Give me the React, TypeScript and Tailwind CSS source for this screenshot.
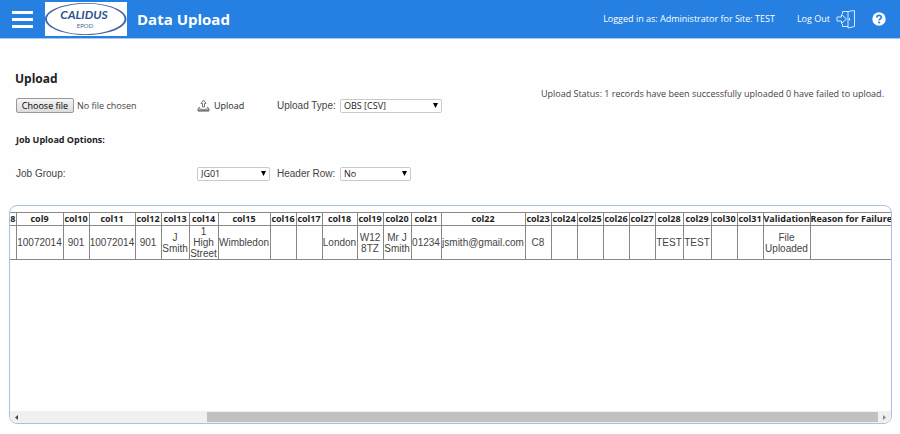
import { useRef } from "react";
import clsx from "clsx";

const columns = [
  { name: "8", value: "", width: "w-[6px]" },
  { name: "col9", value: "10072014", width: "w-[47px]" },
  { name: "col10", value: "901", width: "w-[26px]" },
  { name: "col11", value: "10072014", width: "w-[46px]" },
  { name: "col12", value: "901", width: "w-[26px]" },
  { name: "col13", value: "J Smith", width: "w-[28px]" },
  { name: "col14", value: "1 High Street", width: "w-[29px]" },
  { name: "col15", value: "Wimbledon", width: "w-[52px]" },
  { name: "col16", value: "", width: "w-[26px]" },
  { name: "col17", value: "", width: "w-[26px]" },
  { name: "col18", value: "London", width: "w-[35px]" },
  { name: "col19", value: "W12 8TZ", width: "w-[26px]" },
  { name: "col20", value: "Mr J Smith", width: "w-[28px]" },
  { name: "col21", value: "01234", width: "w-[30px]" },
  { name: "col22", value: "jsmith@gmail.com", width: "w-[84px]" },
  { name: "col23", value: "C8", width: "w-[26px]" },
  { name: "col24", value: "", width: "w-[26px]" },
  { name: "col25", value: "", width: "w-[26px]" },
  { name: "col26", value: "", width: "w-[26px]" },
  { name: "col27", value: "", width: "w-[26px]" },
  { name: "col28", value: "TEST", width: "w-[28px]" },
  { name: "col29", value: "TEST", width: "w-[28px]" },
  { name: "col30", value: "", width: "w-[26px]" },
  { name: "col31", value: "", width: "w-[26px]" },
  { name: "Validation", value: "File Uploaded", width: "w-[47px]" },
  { name: "Reason for Failure", value: "", width: "" },
];

function Logo() {
  return (
    <svg className="h-[34px] w-[82px] bg-white" viewBox="0 0 82 34" role="img" aria-label="Calidus EPOD">
      <path
        fillRule="evenodd"
        fill="#4565a5"
        d="M41 1C63 1 81.500 8 81.500 17S63 33 41 33 0 26 0 17 19 1 41 1ZM42 1.800C20 1.800 2 9 2 17S20 32.200 40 32.200 79.500 25 79.500 17 62 1.800 42 1.800Z"
      />
      <text x="39" y="17" textAnchor="middle" fill="#2a5291" className="font-['Lato',sans-serif] text-[12px] font-bold italic">
        CALIDUS
      </text>
      <text x="40" y="26" textAnchor="middle" fill="#3f6d96" className="font-['Lato',sans-serif] text-[6px]">
        EPOD
      </text>
    </svg>
  );
}

function LogOutIcon() {
  return (
    <svg className="h-5 w-5" viewBox="0 0 20 20" fill="none" stroke="#d9eaff" strokeLinejoin="round">
      <path d="M6.500 5V2.500H12M6.500 15V17.500H12" />
      <path d="M12 2.500L18.500 1.500V17.500L12 19Z" />
      <path d="M1 8H5.500V5.500L10.500 10L5.500 14.500V12H1Z" />
      <path d="M13.500 9V11.500" />
    </svg>
  );
}

function HelpIcon() {
  return (
    <svg className="h-[14px] w-[14px]" viewBox="0 0 14 14" fill="none">
      <circle cx="7" cy="7" r="6.700" fill="#fff" />
      <path d="M4.800 5.400C4.800 2.700 9.300 2.700 9.300 5.300C9.300 6.800 7.200 6.900 7.200 8.500" stroke="#2580e2" strokeWidth="1.700" />
      <circle cx="7.200" cy="10.500" r="1.100" fill="#2580e2" />
    </svg>
  );
}

function UploadIcon() {
  return (
    <svg className="h-[13px] w-[13px]" viewBox="0 0 13 13" fill="none" stroke="#777" strokeLinejoin="round">
      <path d="M5.500 8V4.500H4L6.500 1L9 4.500H7.500V8Z" />
      <path d="M3 8L1 9.500V12H12V9.500L10 8M1 10H4C4.500 11 8.500 11 9 10H12" />
      <path d="M1 11.500H12" strokeWidth="1.500" />
    </svg>
  );
}

function Select({ id, options, className }: any) {
  return (
    <div className={clsx("relative h-[14px]", className)}>
      <select
        id={id}
        className="block h-full w-full appearance-none rounded-xs border border-[#c9c9c9] bg-white pl-[3px] font-['Open_Sans',sans-serif] text-[9px] leading-3 text-[#222]"
      >
        {options.map((option: string) => (
          <option key={option}>{option}</option>
        ))}
      </select>
      <svg className="pointer-events-none absolute top-1 right-1 h-[5px] w-[5px]" viewBox="0 0 5 5">
        <path d="M0 0H5L2.500 5Z" fill="#000" />
      </svg>
    </div>
  );
}

function Header() {
  return (
    <header className="flex h-[39px] items-center border-b border-[#a5c9f1] bg-[#2580e2] pr-[14px] pl-3 text-white">
      <button aria-label="Menu" className="flex w-[21px] flex-col gap-1">
        <span className="h-[3px] w-full bg-white" />
        <span className="h-[3px] w-full bg-white" />
        <span className="h-[3px] w-full bg-white" />
      </button>
      <div className="ml-3">
        <Logo />
      </div>
      <h1 className="ml-[10px] text-[15px] font-bold">Data Upload</h1>
      <div className="ml-auto flex items-center text-[9px]">
        <span>Logged in as: Administrator for Site: TEST</span>
        <a href="#logout" className="ml-[22px] flex items-center gap-[6px]">
          Log Out
          <LogOutIcon />
        </a>
        <a href="#help" aria-label="Help" className="ml-4">
          <HelpIcon />
        </a>
      </div>
    </header>
  );
}

function UploadForm() {
  const fileInput = useRef<HTMLInputElement>(null);

  return (
    <form className="px-4 pt-8 text-[9px] leading-[14px] text-[#444]">
      <h2 className="-ml-px text-xs leading-4 font-bold text-[#222]">Upload</h2>
      <div className="flex justify-between">
        <div className="grid grid-cols-[181px_80px_63px_102px] items-center pt-[11px]">
          <div className="flex items-center gap-[3px]">
            <input ref={fileInput} type="file" aria-label="File" className="hidden" />
            <button
              type="button"
              onClick={() => fileInput.current?.click()}
              className="h-[15px] w-[58px] rounded-xs border border-[#999] bg-linear-to-b from-[#f6f6f6] to-[#dcdcdc] leading-3 whitespace-nowrap text-black"
            >
              Choose file
            </button>
            <span>No file chosen</span>
          </div>
          <button type="button" className="flex items-center gap-1 text-[#222]">
            <UploadIcon />
            Upload
          </button>
          <label htmlFor="uploadType" className="font-['Liberation_Sans',sans-serif] text-[10px] whitespace-nowrap">
            Upload Type:
          </label>
          <Select id="uploadType" options={["OBS [CSV]"]} className="w-[102px]" />
        </div>
        <p role="status">
          Upload Status: 1 records have been successfully uploaded 0 have failed to upload.
        </p>
      </div>
      <h3 className="pt-5 font-bold text-[#222]">Job Upload Options:</h3>
      <div className="grid grid-cols-[181px_80px_63px_102px] items-center pt-5 font-['Liberation_Sans',sans-serif] text-[10px] whitespace-nowrap">
        <label htmlFor="jobGroup">Job Group:</label>
        <Select id="jobGroup" options={["JG01"]} className="w-[73px]" />
        <label htmlFor="headerRow">Header Row:</label>
        <Select id="headerRow" options={["No", "Yes"]} className="w-[71px]" />
      </div>
    </form>
  );
}

function ResultsTable() {
  return (
    <table className="w-full table-fixed border-collapse text-center">
      <thead>
        <tr className="h-[13px] border-y border-[#888] text-[9px] leading-3 text-[#222]">
          {columns.map((column) => (
            <th
              key={column.name}
              scope="col"
              className={clsx("border-r border-[#888] p-0 font-bold whitespace-nowrap last:border-r-0", column.width)}
            >
              {column.name}
            </th>
          ))}
        </tr>
      </thead>
      <tbody>
        <tr className="h-[34px] border-b border-[#888] font-['Liberation_Sans',sans-serif] text-[10px] leading-[11px] text-[#444]">
          {columns.map((column) => (
            <td key={column.name} className="border-r border-[#888] p-0 last:border-r-0">
              {column.value}
            </td>
          ))}
        </tr>
      </tbody>
    </table>
  );
}

function ScrollBar() {
  return (
    <div className="flex h-3 items-center bg-[#f0f0f0]">
      <button aria-label="Scroll left" className="flex w-3 justify-center">
        <svg className="h-[5px] w-[3px]" viewBox="0 0 3 5">
          <path d="M3 0V5L0 2.500Z" fill="#444" />
        </svg>
      </button>
      <div className="flex flex-1 pl-[185px]">
        <div className="h-[10px] flex-1 bg-[#c1c1c1]" />
      </div>
      <button aria-label="Scroll right" className="flex w-[13px] justify-center">
        <svg className="h-[5px] w-[3px]" viewBox="0 0 3 5">
          <path d="M0 0V5L3 2.500Z" fill="#888" />
        </svg>
      </button>
    </div>
  );
}

export default function App() {
  return (
    <div className="min-h-screen bg-[#fefefe] font-['Open_Sans',sans-serif]">
      <Header />
      <main>
        <UploadForm />
        <section className="mx-2 mt-6 ml-[9px] flex min-h-[219px] flex-col justify-between overflow-hidden rounded-lg border border-[#a9c1e6] bg-white pt-[6px]">
          <ResultsTable />
          <ScrollBar />
        </section>
      </main>
    </div>
  );
}
